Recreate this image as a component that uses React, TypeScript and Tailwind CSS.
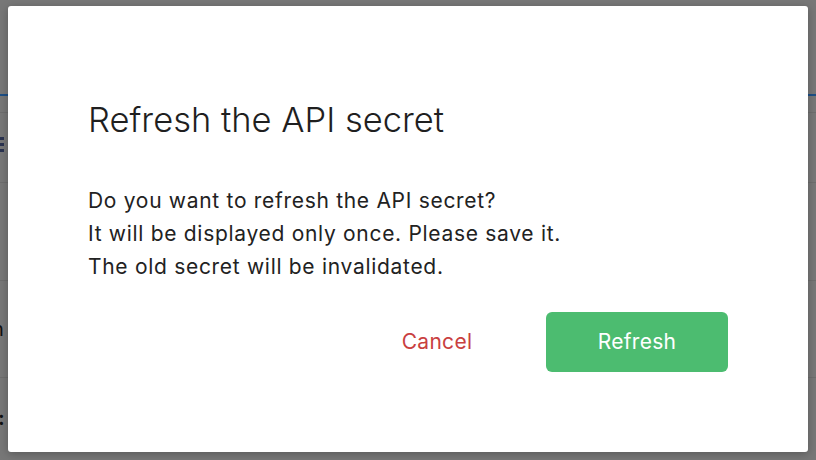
import React from "react";

export default function App() {
  const font = { fontFamily: "Inter, 'Noto Sans', sans-serif" };
  return (
    <div className="relative w-[816px] h-[460px] overflow-hidden bg-[#777777]" style={font}>
      {/* dimmed page behind */}
      <div className="flex flex-col w-full">
        <div className="h-[94px]" />
        <div className="h-[2px] bg-[#1d4f86]" />
        <div className="h-[16px]" />
        <div className="h-[70px] border-t border-[#6d6d6d] flex items-center">
          <div className="flex flex-col gap-[3px] pl-0 mt-[-6px]">
            <div className="w-[4px] h-[3px] bg-[#2a3350]" />
            <div className="w-[4px] h-[3px] bg-[#2a3350]" />
            <div className="w-[4px] h-[3px] bg-[#2a3350]" />
          </div>
        </div>
        <div className="h-[98px] border-t border-[#6d6d6d]" />
        <div className="h-[97px] border-t border-[#6d6d6d] flex items-center">
          <span className="text-[20px] text-[#111] ml-[-8px]">h</span>
        </div>
        <div className="h-[82px] border-t border-[#6d6d6d] flex items-end pb-[26px]">
          <span className="text-[20px] font-bold text-[#111] ml-[-2px]">:</span>
        </div>
      </div>

      {/* modal */}
      <div className="absolute left-[8px] top-[6px] w-[800px] h-[446px] bg-white rounded-[3px] shadow-[0_2px_8px_rgba(0,0,0,0.25)] flex flex-col pl-[80px] pr-[80px]">
        <h1 className="mt-[92px] text-[34.5px] leading-[44px] font-light text-[#1f1f1f]">
          Refresh the API secret
        </h1>
        <div className="mt-[42px] text-[21px] leading-[33px] tracking-[0.7px] text-[#222]">
          <p>Do you want to refresh the API secret?</p>
          <p>It will be displayed only once. Please save it.</p>
          <p>The old secret will be invalidated.</p>
        </div>
        <div className="mt-[29px] flex justify-end items-center gap-[18px]">
          <button className="w-[182px] h-[60px] text-[21px] tracking-[0.3px] text-[#c9403f]">Cancel</button>
          <button className="w-[182px] h-[60px] rounded-[6px] bg-[#4cbc70] text-white text-[21px] tracking-[0.3px]">
            Refresh
          </button>
        </div>
      </div>
    </div>
  );
}
